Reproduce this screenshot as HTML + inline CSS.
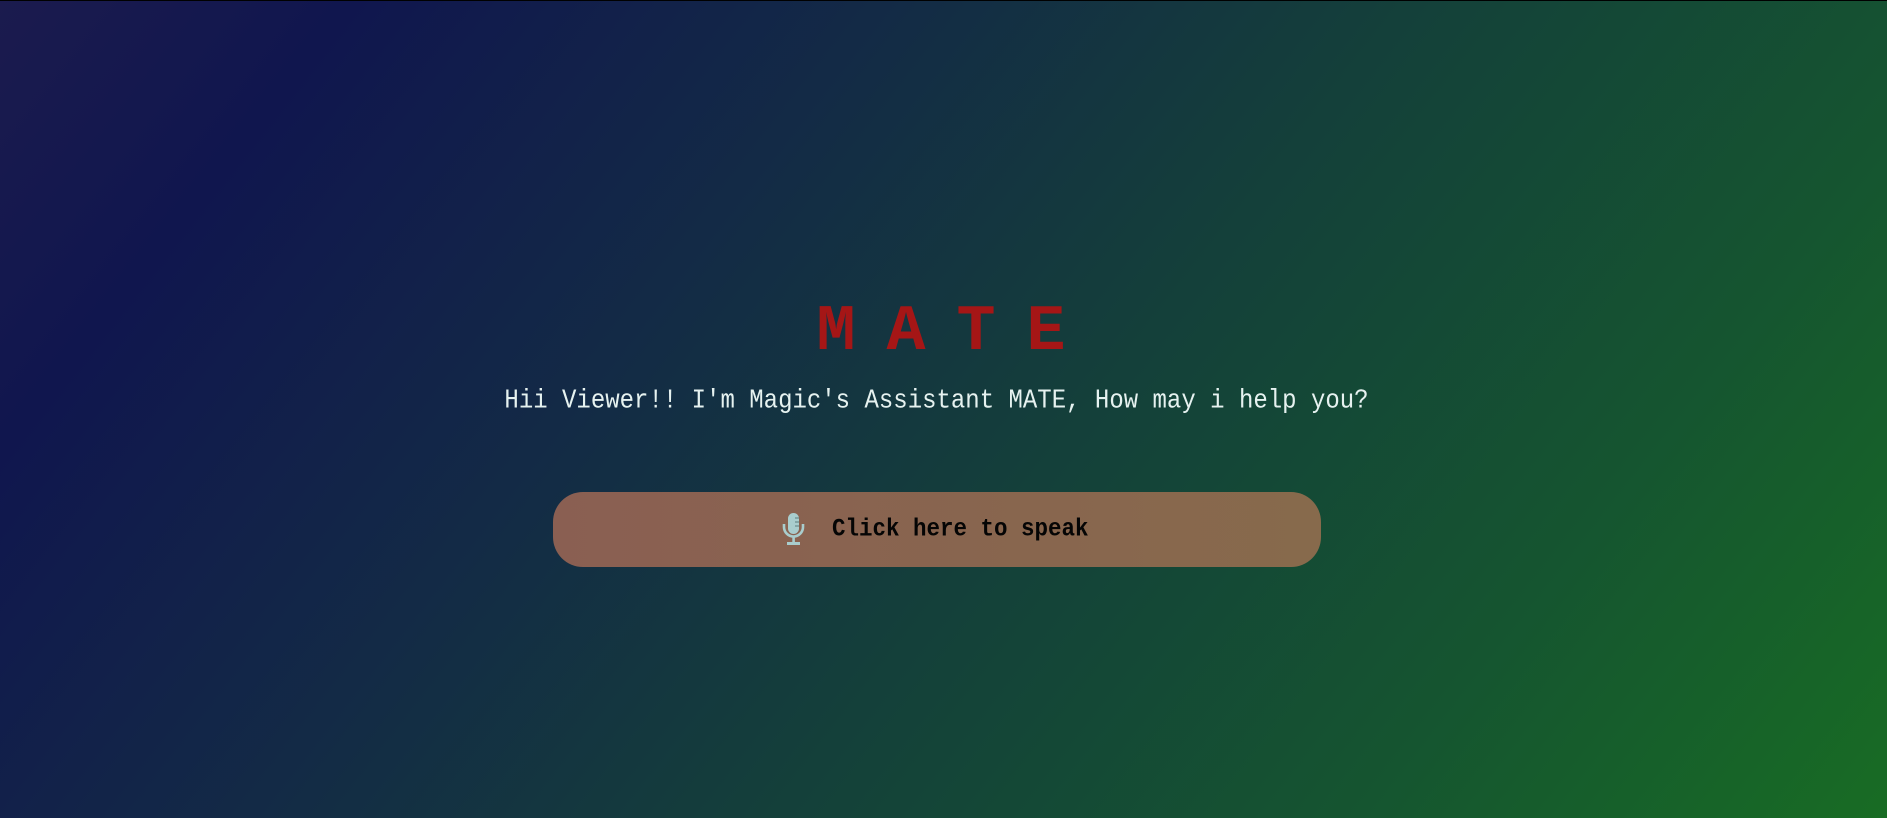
<!DOCTYPE html>
<html><head><meta charset="utf-8"><style>
html,body{margin:0;padding:0;width:1887px;height:818px;overflow:hidden}
body{background:linear-gradient(128deg,#1b1b4e 0%,#10164e 14%,#132a46 35%,#14403a 56%,#155530 79%,#186c24 100%);border-top:1px solid #000;box-sizing:border-box;position:relative;font-family:"Liberation Mono",monospace}
.t{position:absolute;left:0;width:1887px;top:296px;text-align:center;font-size:65px;font-weight:bold;color:#a51616;letter-spacing:31px;text-indent:26px;line-height:70px}
.s{position:absolute;left:-7px;width:1887px;top:384px;text-align:center;font-size:24px;color:#e6f2f0;line-height:34px;transform:scaleY(1.1)}
.b{position:absolute;left:553px;top:491px;width:768px;height:75px;border-radius:30px;background:linear-gradient(90deg,#8a5f52,#876a4c)}
.b span{position:absolute;left:279px;top:20px;font-size:22.5px;font-weight:bold;color:#050505;line-height:34px;transform:scaleY(1.1)}
.b svg{position:absolute;left:228px;top:19px}
</style></head><body>
<div class="t">MATE</div>
<div class="s">Hii Viewer!! I'm Magic's Assistant MATE, How may i help you?</div>
<div class="b"><svg width="26" height="36" viewBox="0 0 26 36"><rect x="7" y="2" width="11" height="21" rx="5.5" fill="#a9cdcd"/><path d="M3 13 V16 A9.5 9.5 0 0 0 22 16 V13" fill="none" stroke="#a9cdcd" stroke-width="2.6"/><rect x="11.3" y="25" width="2.6" height="6" fill="#a9cdcd"/><rect x="6" y="31" width="13" height="3" fill="#a9cdcd"/><path d="M14 7h4M14 11h4M14 15h4" stroke="#6b8c8c" stroke-width="1.3"/></svg><span>Click here to speak</span></div>
</body></html>
